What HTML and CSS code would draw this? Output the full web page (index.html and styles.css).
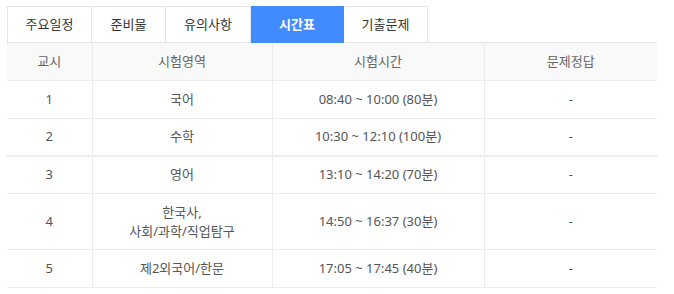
FILE: index.html
```html
<!DOCTYPE html>
<html lang="ko">
<head>
<meta charset="utf-8">
<link rel="stylesheet" href="styles.css">
</head>
<body>
<div class="wrap">
  <ul class="tabs">
    <li class="tab">주요일정</li>
    <li class="tab">준비물</li>
    <li class="tab">유의사항</li>
    <li class="tab active">시간표</li>
    <li class="tab">기출문제</li>
  </ul>
  <table class="schedule">
    <colgroup>
      <col class="c1"><col class="c2"><col class="c3"><col class="c4">
    </colgroup>
    <thead>
      <tr><th>교시</th><th>시험영역</th><th>시험시간</th><th>문제정답</th></tr>
    </thead>
    <tbody>
      <tr><td>1</td><td>국어</td><td>08:40 ~ 10:00 (80분)</td><td>-</td></tr>
      <tr class="thick"><td>2</td><td>수학</td><td>10:30 ~ 12:10 (100분)</td><td>-</td></tr>
      <tr><td>3</td><td>영어</td><td>13:10 ~ 14:20 (70분)</td><td>-</td></tr>
      <tr class="tall"><td>4</td><td>한국사,<br>사회/과학/직업탐구</td><td>14:50 ~ 16:37 (30분)</td><td>-</td></tr>
      <tr><td>5</td><td>제2외국어/한문</td><td>17:05 ~ 17:45 (40분)</td><td>-</td></tr>
    </tbody>
  </table>
</div>
</body>
</html>
```
FILE: styles.css
```css
* { box-sizing: border-box; }
html, body { margin: 0; padding: 0; background: #fff; }
body {
  font-family: "Noto Sans", "Noto Sans CJK KR", sans-serif;
  font-size: 13px;
  color: #555;
}
.wrap {
  padding: 6px 17px 0 7px;
}
.tabs {
  list-style: none;
  margin: 0;
  padding: 0;
  display: flex;
}
.tab {
  height: 37px;
  line-height: 35px;
  padding: 0 16px;
  border: 1px solid #e4e4e4;
  border-left: none;
  color: #333;
  font-size: 13px;
  text-align: center;
  white-space: nowrap;
}
.tab:first-child { border-left: 1px solid #e4e4e4; width: 85px; }
.tab:nth-child(2) { width: 74px; }
.tab:nth-child(3) { width: 85px; }
.tab:nth-child(5) { width: 84px; }
.tab.active {
  width: 93px;
  background: #428bfe;
  border-color: #428bfe;
  color: #fff;
  font-weight: bold;
}
.schedule {
  width: 650px;
  border-collapse: collapse;
  table-layout: fixed;
  margin-top: -1px;
}
.c1 { width: 85px; }
.c2 { width: 180px; }
.c3 { width: 212px; }
.c4 { width: 173px; }
.schedule th, .schedule td {
  border: 1px solid #ececec;
  text-align: center;
  vertical-align: middle;
  padding: 0;
  line-height: 19px;
}
.schedule tr > :first-child { border-left: none; }
.schedule tr > :last-child { border-right: none; }
.schedule th {
  height: 38px;
  background: #f9f9f9;
  color: #666;
  font-weight: normal;
  border-top: 1px solid #e4e4e4;
}
.schedule td {
  height: 38px;
  color: #555;
}
.schedule tr.thick td { border-bottom: 2px solid #ececec; height: 37px; }
.schedule tr.tall td { height: 56px; }
```
